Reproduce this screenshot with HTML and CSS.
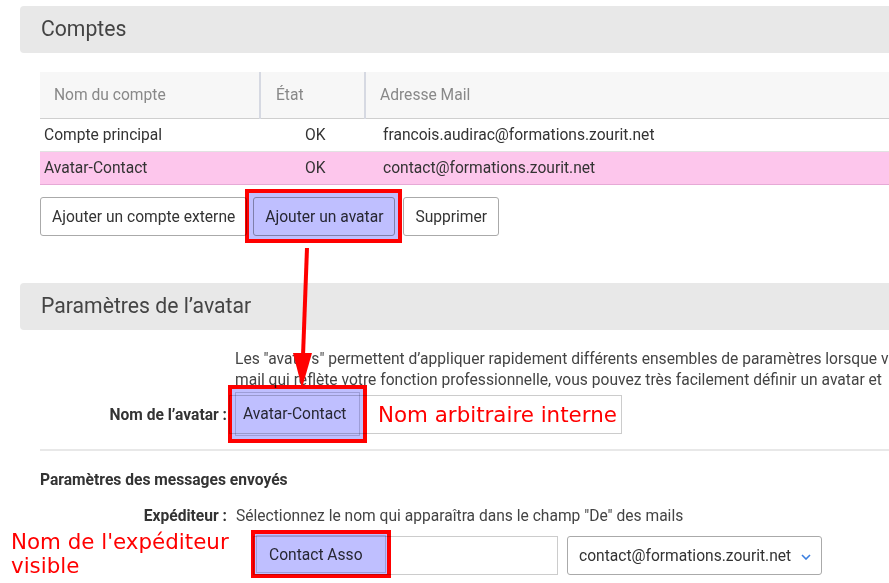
FILE: index.html
```
<!DOCTYPE html>
<html lang="fr">
<head>
  <meta charset="UTF-8">
  <title>Comptes - Paramètres de l'avatar</title>
  <link rel="stylesheet" href="styles.css">
</head>
<body>
  <div class="page">
    <div class="section-title">Comptes</div>

    <div class="accounts">
      <table class="account-table">
        <thead>
          <tr>
            <th class="col-name">Nom du compte</th>
            <th class="col-state">État</th>
            <th class="col-mail">Adresse Mail</th>
          </tr>
        </thead>
        <tbody>
          <tr>
            <td class="col-name">Compte principal</td>
            <td class="col-state">OK</td>
            <td class="col-mail">francois.audirac@formations.zourit.net</td>
          </tr>
          <tr class="selected">
            <td class="col-name">Avatar-Contact</td>
            <td class="col-state">OK</td>
            <td class="col-mail">contact@formations.zourit.net</td>
          </tr>
        </tbody>
      </table>

      <div class="actions">
        <button class="btn">Ajouter un compte externe</button>
        <button class="btn mark mark-btn">Ajouter un avatar</button>
        <button class="btn">Supprimer</button>
      </div>
    </div>

    <div class="section-title second">Paramètres de l’avatar</div>

    <div class="avatar-body">
      <div class="form-row">
        <div class="label"></div>
        <div class="desc">
          Les "avatars" permettent d’appliquer rapidement différents ensembles de paramètres lorsque vous<br>
          mail qui reflète votre fonction professionnelle, vous pouvez très facilement définir un avatar et
        </div>
      </div>

      <div class="form-row name-row">
        <div class="label">Nom de l’avatar :</div>
        <div class="field name-field mark mark-name">
          Avatar-Contact
          <span class="note note-name">Nom arbitraire interne</span>
        </div>
      </div>

      <hr class="sep">

      <div class="subtitle">Paramètres des messages envoyés</div>

      <div class="form-row sender-row">
        <div class="label">Expéditeur :</div>
        <div class="hint">Sélectionnez le nom qui apparaîtra dans le champ "De" des mails</div>
      </div>

      <div class="sender-fields">
        <span class="note note-sender">Nom de l'expéditeur<br>visible</span>
        <div class="field sender-field mark mark-sender">Contact Asso</div>
        <div class="select">
          contact@formations.zourit.net
          <svg class="chevron" width="10" height="6" viewBox="0 0 10 6">
            <path d="M1 1 L5 5 L9 1" fill="none" stroke="#3b7fe0" stroke-width="1.6"/>
          </svg>
        </div>
      </div>
    </div>
  </div>

  <!-- annotation arrow -->
  <svg class="arrow" width="889" height="583" viewBox="0 0 889 583">
    <line x1="307" y1="248" x2="303" y2="356" stroke="#ff0000" stroke-width="4"/>
    <polygon points="293,353 312,353 302,388" fill="#ff0000"/>
  </svg>
</body>
</html>
```

FILE: styles.css
```
body {
  margin: 0;
  width: 889px;
  height: 583px;
  overflow: hidden;
  background: #fff;
  font-family: Roboto, "Liberation Sans", sans-serif;
  font-size: 15.6px;
  color: #333;
  position: relative;
}

.page {
  padding: 6px 0 0 20px;
  width: 1000px;
}

.section-title {
  height: 47px;
  line-height: 45px;
  background: #e8e8e8;
  border-radius: 4px 0 0 4px;
  padding-left: 21px;
  font-size: 21.2px;
  color: #444;
}

.section-title.second {
  margin-top: 47px;
}

.accounts {
  margin: 19px 0 0 20px;
}

.account-table {
  border-collapse: collapse;
  width: 880px;
}

.account-table th {
  height: 46px;
  background: #f7f7f7;
  border-bottom: 1px solid #cfcfcf;
  font-weight: normal;
  text-align: left;
  color: #888;
  padding: 0;
}

.account-table th.col-state,
.account-table th.col-mail {
  border-left: 2px solid #d6d9e2;
}

.account-table th.col-name { width: 205px; padding-left: 14px; }
.account-table th.col-state { width: 88px; padding-left: 15px; }
.account-table th.col-mail { padding-left: 14px; }

.account-table td {
  height: 32px;
  padding: 0;
  border-bottom: 1px solid #e2e2e2;
}

.account-table td.col-name { padding-left: 4px; }
.account-table td.col-state { padding-left: 45px; }
.account-table td.col-mail { padding-left: 18px; }

.account-table tr.selected td {
  background: #fdc6ec;
  border-bottom-color: #e6a9d6;
}

.actions {
  display: flex;
  gap: 6px;
  margin-top: 12px;
}

.btn {
  height: 39px;
  padding: 0 11px;
  background: #fff;
  border: 1px solid #aaa;
  border-radius: 3px;
  font-family: Roboto, "Liberation Sans", sans-serif;
  font-size: 15.6px;
  color: #333;
}

.btn + .btn + .btn {
  margin-left: 2px;
}

/* red annotation frames */
.mark {
  position: relative;
}

.mark::after {
  content: "";
  position: absolute;
  background: #bfbfff;
  border: 4px solid #ff0000;
  mix-blend-mode: multiply;
  box-shadow: inset 0 0 0 3px #bfbfff, inset 0 0 0 4px #9d9dd8;
}

.mark-btn::after {
  left: -9px;
  top: -9px;
  right: -8px;
  bottom: -8px;
  box-shadow: none;
}

.mark-name::after {
  left: -2px;
  top: -11px;
  width: 131px;
  height: 50px;
}

.mark-sender::after {
  left: -3px;
  top: -7px;
  width: 132px;
  height: 40px;
  box-shadow: inset 0 0 0 1px #bfbfff, inset 0 0 0 2px #9d9dd8;
}

.avatar-body {
  margin-left: 20px;
}

.form-row {
  display: flex;
  align-items: center;
}

.label {
  width: 187px;
  flex: none;
  text-align: right;
  font-weight: bold;
  color: #333;
  padding-right: 2px;
}

.desc {
  margin-top: 19px;
  padding-left: 6px;
  line-height: 21px;
  white-space: nowrap;
  color: #444;
}

.name-row {
  margin-top: 4px;
}

.field {
  height: 37px;
  line-height: 37px;
  border: 1px solid #ccc;
  box-sizing: content-box;
  color: #333;
}

.name-field {
  width: 378px;
  padding-left: 13px;
}

.note {
  position: absolute;
  font-family: "DejaVu Sans", sans-serif;
  font-size: 21.4px;
  color: #ff0000;
  line-height: 24px;
  white-space: nowrap;
}

.note-name {
  left: 148px;
  top: 7px;
}

.sep {
  margin: 15px 0 0;
  border: 0;
  border-top: 2px solid #e8e8e8;
}

.subtitle {
  margin-top: 19px;
  line-height: 20px;
  font-weight: bold;
  color: #333;
}

.sender-row {
  margin-top: 16px;
  line-height: 20px;
}

.hint {
  padding-left: 7px;
  color: #444;
}

.sender-fields {
  position: relative;
  display: flex;
  gap: 9px;
  margin-top: 10px;
  padding-left: 213px;
}

.note-sender {
  left: -29px;
  top: -6px;
}

.sender-field {
  width: 288px;
  padding-left: 15px;
}

.select {
  display: flex;
  align-items: center;
  gap: 10px;
  width: 242px;
  height: 37px;
  padding-left: 11px;
  border: 1px solid #aaa;
  border-radius: 3px;
  color: #333;
}

.chevron {
  margin-top: 2px;
}

.arrow {
  position: absolute;
  left: 0;
  top: 0;
  pointer-events: none;
}
```
